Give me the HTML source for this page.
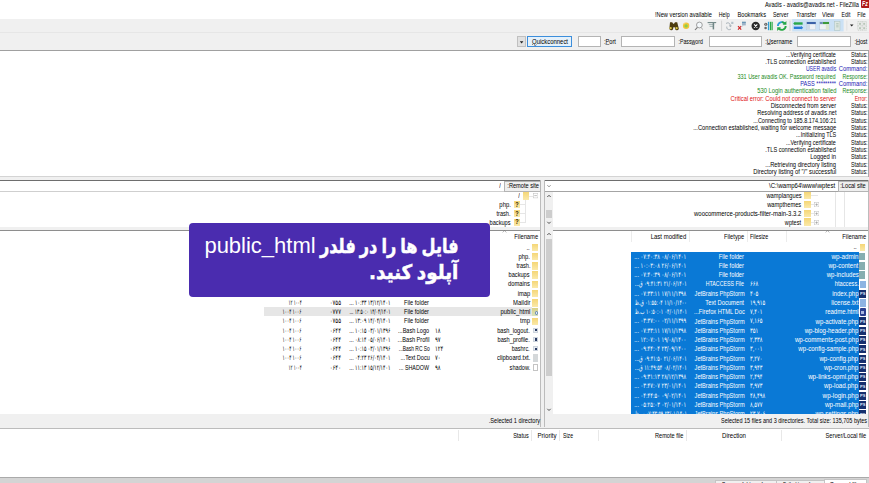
<!DOCTYPE html>
<html lang="fa"><head><meta charset="utf-8"><title>FileZilla</title><style>
html,body{margin:0;padding:0;background:#fff;}
body{width:869px;height:483px;overflow:hidden;position:relative;font-family:"Liberation Sans",sans-serif;}
.b{position:absolute;display:block;}
.bb{box-sizing:border-box;}
.t{position:absolute;white-space:nowrap;font:6.6px/8px "Liberation Sans",sans-serif;color:#000;direction:ltr;}
.fa{font-family:"DejaVu Sans","Liberation Sans",sans-serif;font-size:7px;}
.ov{position:absolute;white-space:nowrap;color:#fff;}
.fab{font:bold 20px/28px "DejaVu Sans",sans-serif;transform-origin:100% 50%;-webkit-text-stroke:0.5px #fff;word-spacing:-2px;}
u{text-decoration-thickness:0.4px;text-underline-offset:0.2px;text-decoration-color:#8a8a8a;}
</style></head>
<body>
<div class="b" style="left:0.00px;top:18.50px;width:869.00px;height:31.50px;background:#f0f0f0;"></div>
<div class="b" style="left:0.00px;top:32.00px;width:869.00px;height:1.00px;background:#e6e6e6;"></div>
<div class="b" style="left:0.00px;top:49.50px;width:869.00px;height:1.50px;background:#a0a0a0;"></div>
<div class="b" style="left:0.00px;top:176.20px;width:869.00px;height:0.80px;background:#d4d4d4;"></div>
<div class="b" style="left:0.00px;top:177.00px;width:869.00px;height:3.00px;background:#f0f0f0;"></div>
<div class="b" style="left:868.00px;top:51.00px;width:1.00px;height:126.00px;background:#a8a8a8;"></div>
<div class="t" style="top:0.60px;right:10.40px;transform-origin:100% 50%;transform:scaleX(0.855);">Avadis - avadis@avadis.net - FileZilla</div>
<div class="b" style="left:860.9px;top:0px;width:8.1px;height:7.5px;background:#ae1a1a;border-radius:0 0 0 1px;"></div>
<div class="t" style="top:-0.10px;left:862.20px;color:#fff;font-size:7px;transform-origin:0 50%;transform:scaleX(0.745);font-weight:bold;font-style:italic;"><b>F</b>z</div>
<div class="t" style="top:11.00px;right:3.00px;transform-origin:100% 50%;transform:scaleX(0.791);">File</div>
<div class="t" style="top:11.00px;right:18.20px;transform-origin:100% 50%;transform:scaleX(0.774);">Edit</div>
<div class="t" style="top:11.00px;right:34.60px;transform-origin:100% 50%;transform:scaleX(0.853);">View</div>
<div class="t" style="top:11.00px;right:53.20px;transform-origin:100% 50%;transform:scaleX(0.827);">Transfer</div>
<div class="t" style="top:11.00px;right:80.10px;transform-origin:100% 50%;transform:scaleX(0.798);">Server</div>
<div class="t" style="top:11.00px;right:102.70px;transform-origin:100% 50%;transform:scaleX(0.864);">Bookmarks</div>
<div class="t" style="top:11.00px;right:139.00px;transform-origin:100% 50%;transform:scaleX(0.796);">Help</div>
<div class="t" style="top:11.00px;right:157.00px;transform-origin:100% 50%;transform:scaleX(0.864);">!New version available</div>
<svg class="b" style="left:660px;top:18px" width="209" height="15" viewBox="660 18 209 15">
<rect x="792.2" y="19" width="51.4" height="12.4" fill="#cbe1f5"/>
<g stroke="#9aa89a" stroke-width="0.5" fill="none"><rect x="857.8" y="21.6" width="8.6" height="8.6" stroke-dasharray="1 0.9"/><path d="M857.8 25.9h8.6M862.1 21.6v8.6" stroke-dasharray="1 0.9"/></g>
<g fill="#b9c6b9"><rect x="859" y="22.8" width="2" height="2"/><rect x="863.2" y="22.8" width="2" height="2"/><rect x="859" y="27.2" width="2" height="2"/><rect x="863.2" y="27.2" width="2" height="2"/></g>
<path d="M849.9 24.4h3.6l-1.8 2.1z" fill="#222"/>
<path d="M846.8 20.6v10" stroke="#d8d8d8" stroke-width="0.6"/>
<g><rect x="794.6" y="22.3" width="8" height="2.4" fill="#2aa84a"/><rect x="793.8" y="26.6" width="8" height="2.4" fill="#2b7bd6"/><path d="M793.2 23.5l2-1.8v3.6z" fill="#2aa84a"/><path d="M803.2 27.8l-2-1.8v3.6z" fill="#2b7bd6"/></g>
<g><rect x="806.8" y="22" width="9" height="7.8" fill="#eef2f6" stroke="#b4c4d4" stroke-width="0.4"/><rect x="806.8" y="22" width="9" height="2.1" fill="#3b62a8"/><rect x="806.8" y="24.1" width="3.2" height="5.7" fill="#cfdbe8"/></g>
<g><rect x="819.8" y="22" width="9.2" height="7.8" fill="#eef2f6" stroke="#b4c4d4" stroke-width="0.4"/><rect x="822.8" y="22" width="6.2" height="2.1" fill="#3c9a3c"/><rect x="819.8" y="22" width="3" height="2.1" fill="#6f8fb8"/><rect x="825.8" y="24.1" width="3.2" height="5.7" fill="#dbe6cf"/></g>
<g><rect x="834.8" y="21.6" width="5.2" height="8.6" fill="#dde7e2" stroke="#a9bcb0" stroke-width="0.4"/><path d="M836.2 23.6h2.4M836.2 25.2h2.4M836.2 26.8h2.4" stroke="#8faa98" stroke-width="0.5"/></g>
<path d="M790 20.6v10.4" stroke="#c4c4c4" stroke-width="0.7"/>
<g fill="none" stroke-width="1.9"><path d="M777.9 26a3.9 3.9 0 0 1 6.8-2.5" stroke="#2f9fd8"/><path d="M785.7 26a3.9 3.9 0 0 1-6.8 2.5" stroke="#27a844"/><path d="M781.8 22.1a3.9 3.9 0 0 1 2.9 1.4" stroke="#27a844"/></g>
<path d="M786.4 20.9v3.8h-3.8zM777.2 31.1v-3.8h3.8z" fill="#27a844"/>
<g><rect x="767.9" y="21.8" width="1.3" height="8.4" fill="#2f9fd8"/><rect x="769.9" y="21.8" width="1.3" height="8.4" fill="#27a844"/><rect x="771.6" y="21.8" width="1.1" height="8.4" fill="#27a844"/><circle cx="765.8" cy="24.2" r="1.5" fill="#555"/><circle cx="765.8" cy="24.2" r="0.6" fill="#ddd"/><circle cx="765.6" cy="28" r="1.3" fill="#6a6a6a"/></g>
<circle cx="755.7" cy="26" r="4.2" fill="#2a2a2a"/><path d="M754.1 24.4l3.2 3.2M757.3 24.4l-3.2 3.2" stroke="#fff" stroke-width="1.1"/>
<g><path d="M742 21.8h3.8v3.6h-3.8z" fill="#9db4c8"/><path d="M742 21.8h3.8v1h-3.8z" fill="#5e8fb0"/><path d="M738 26.2l3.2 3.4M741.2 26.2l-3.2 3.4" stroke="#d02828" stroke-width="1.2"/><path d="M743 25.4l-1.4 1.6" stroke="#9db4c8" stroke-width="0.6"/></g>
<g fill="none" stroke="#a4aeb6" stroke-width="1"><path d="M726 23.6c2.2-1.8 4.6-.2 4.2 2.6"/><path d="M731 29c-2.2 1.6-4.6.2-4.2-2.4"/></g><path d="M732 25.4l-1.6 1.8-1.6-1.8z" fill="#a4aeb6"/><path d="M731.2 21.8h2.2v2.2h-2.2z" fill="#b4c0c8"/>
<path d="M721.6 20.6v10.4" stroke="#c4c4c4" stroke-width="0.7"/>
<g stroke="#6f8585" stroke-width="0.9"><path d="M707.6 22.6h8.6" stroke-width="1.1"/><path d="M708.8 24.6h5.4M709.6 26.4h3.6" stroke="#9aaeae"/><path d="M713.4 23v6.4" stroke-width="1.5"/></g>
<circle cx="699.4" cy="25" r="2.9" fill="#f4f8fb" stroke="#8a8a8a" stroke-width="0.8"/><path d="M697.4 27.4l-2.4 2.6" stroke="#777" stroke-width="1.1"/><path d="M701.4 27.6l1.2 2" stroke="#999" stroke-width="0.8"/>
<circle cx="686.1" cy="25.8" r="3.2" fill="#f2c53a"/><circle cx="686.1" cy="25.9" r="1.7" fill="#8ccf4a"/><path d="M683.4 24.4a3 3 0 0 1 2.4-1.7" stroke="#f7e39a" stroke-width="0.7" fill="none"/>
<path d="M670 22.2h2.2l1 1.6h.8l1-1.6h2.2l1.6 6.2a1.9 1.9 0 0 1-3.7.6l-.3-1.8h-1.4l-.3 1.8a1.9 1.9 0 0 1-3.7-.6z" fill="#4d3d10"/><circle cx="670.6" cy="28.1" r="1.2" fill="#d9c545"/><circle cx="676.6" cy="28.1" r="1.2" fill="#d9c545"/>
</svg>
<div class="b bb" style="left:797.4px;top:36.4px;width:53.60000000000002px;height:10.399999999999999px;background:#fff;border:1px solid #b4b4b4;"></div>
<div class="b bb" style="left:709px;top:36.4px;width:53px;height:10.399999999999999px;background:#fff;border:1px solid #b4b4b4;"></div>
<div class="b bb" style="left:621px;top:36.4px;width:53.799999999999955px;height:10.399999999999999px;background:#fff;border:1px solid #b4b4b4;"></div>
<div class="b bb" style="left:578px;top:36.4px;width:23.399999999999977px;height:10.399999999999999px;background:#fff;border:1px solid #b4b4b4;"></div>
<div class="t" style="top:37.90px;right:2.00px;transform-origin:100% 50%;transform:scaleX(0.844);">:<u>H</u>ost</div>
<div class="t" style="top:37.90px;right:76.40px;transform-origin:100% 50%;transform:scaleX(0.837);">:<u>U</u>sername</div>
<div class="t" style="top:37.90px;right:165.80px;transform-origin:100% 50%;transform:scaleX(0.786);">:Pass<u>w</u>ord</div>
<div class="t" style="top:37.90px;right:253.00px;transform-origin:100% 50%;transform:scaleX(0.860);">:<u>P</u>ort</div>
<div class="b bb" style="left:527.3px;top:36px;width:44.6px;height:11.4px;background:#e5f1fb;border:1px solid #3c8edb;"></div>
<div class="t" style="top:37.90px;left:450.00px;width:200px;text-align:center;transform-origin:50% 50%;transform:scaleX(0.901);"><u>Q</u>uickconnect</div>
<div class="b bb" style="left:517px;top:36.2px;width:9.2px;height:11px;background:#e1e1e1;border:1px solid #c0c0c0;"></div>
<svg class="b" style="left:517px;top:36px" width="10" height="12"><path d="M2.8 5.2h3.6l-1.8 2.2z" fill="#222"/></svg>
<div class="t" style="top:50.60px;right:1.60px;color:#000;transform-origin:100% 50%;transform:scaleX(0.804);">Status:</div>
<div class="t" style="top:50.60px;right:33.00px;color:#000;transform-origin:100% 50%;transform:scaleX(0.818);">...Verifying certificate</div>
<div class="t" style="top:57.95px;right:1.60px;color:#000;transform-origin:100% 50%;transform:scaleX(0.804);">Status:</div>
<div class="t" style="top:57.95px;right:33.00px;color:#000;transform-origin:100% 50%;transform:scaleX(0.852);">.TLS connection established</div>
<div class="t" style="top:65.29px;right:1.60px;color:#1a1ab4;transform-origin:100% 50%;transform:scaleX(0.881);">Command:</div>
<div class="t" style="top:65.29px;right:33.00px;color:#1a1ab4;transform-origin:100% 50%;transform:scaleX(0.773);">USER avadis</div>
<div class="t" style="top:72.64px;right:1.60px;color:#1a8a1a;transform-origin:100% 50%;transform:scaleX(0.793);">Response:</div>
<div class="t" style="top:72.64px;right:33.00px;color:#1a8a1a;transform-origin:100% 50%;transform:scaleX(0.835);">331 User avadis OK. Password required</div>
<div class="t" style="top:79.98px;right:1.60px;color:#1a1ab4;transform-origin:100% 50%;transform:scaleX(0.881);">Command:</div>
<div class="t" style="top:79.98px;right:33.00px;color:#1a1ab4;transform-origin:100% 50%;transform:scaleX(0.854);">PASS *********</div>
<div class="t" style="top:87.33px;right:1.60px;color:#1a8a1a;transform-origin:100% 50%;transform:scaleX(0.793);">Response:</div>
<div class="t" style="top:87.33px;right:33.00px;color:#1a8a1a;transform-origin:100% 50%;transform:scaleX(0.886);">530 Login authentication failed</div>
<div class="t" style="top:94.67px;right:1.60px;color:#e01010;transform-origin:100% 50%;transform:scaleX(0.776);">Error:</div>
<div class="t" style="top:94.67px;right:33.00px;color:#e01010;transform-origin:100% 50%;transform:scaleX(0.879);">Critical error: Could not connect to server</div>
<div class="t" style="top:102.02px;right:1.60px;color:#000;transform-origin:100% 50%;transform:scaleX(0.804);">Status:</div>
<div class="t" style="top:102.02px;right:33.00px;color:#000;transform-origin:100% 50%;transform:scaleX(0.871);">Disconnected from server</div>
<div class="t" style="top:109.36px;right:1.60px;color:#000;transform-origin:100% 50%;transform:scaleX(0.804);">Status:</div>
<div class="t" style="top:109.36px;right:33.00px;color:#000;transform-origin:100% 50%;transform:scaleX(0.848);">Resolving address of avadis.net</div>
<div class="t" style="top:116.71px;right:1.60px;color:#000;transform-origin:100% 50%;transform:scaleX(0.804);">Status:</div>
<div class="t" style="top:116.71px;right:33.00px;color:#000;transform-origin:100% 50%;transform:scaleX(0.836);">...Connecting to 185.8.174.106:21</div>
<div class="t" style="top:124.05px;right:1.60px;color:#000;transform-origin:100% 50%;transform:scaleX(0.804);">Status:</div>
<div class="t" style="top:124.05px;right:33.00px;color:#000;transform-origin:100% 50%;transform:scaleX(0.871);">...Connection established, waiting for welcome message</div>
<div class="t" style="top:131.40px;right:1.60px;color:#000;transform-origin:100% 50%;transform:scaleX(0.804);">Status:</div>
<div class="t" style="top:131.40px;right:33.00px;color:#000;transform-origin:100% 50%;transform:scaleX(0.833);">...Initializing TLS</div>
<div class="t" style="top:138.74px;right:1.60px;color:#000;transform-origin:100% 50%;transform:scaleX(0.804);">Status:</div>
<div class="t" style="top:138.74px;right:33.00px;color:#000;transform-origin:100% 50%;transform:scaleX(0.818);">...Verifying certificate</div>
<div class="t" style="top:146.09px;right:1.60px;color:#000;transform-origin:100% 50%;transform:scaleX(0.804);">Status:</div>
<div class="t" style="top:146.09px;right:33.00px;color:#000;transform-origin:100% 50%;transform:scaleX(0.852);">.TLS connection established</div>
<div class="t" style="top:153.43px;right:1.60px;color:#000;transform-origin:100% 50%;transform:scaleX(0.804);">Status:</div>
<div class="t" style="top:153.43px;right:33.00px;color:#000;transform-origin:100% 50%;transform:scaleX(0.887);">Logged in</div>
<div class="t" style="top:160.78px;right:1.60px;color:#000;transform-origin:100% 50%;transform:scaleX(0.804);">Status:</div>
<div class="t" style="top:160.78px;right:33.00px;color:#000;transform-origin:100% 50%;transform:scaleX(0.872);">...Retrieving directory listing</div>
<div class="t" style="top:168.12px;right:1.60px;color:#000;transform-origin:100% 50%;transform:scaleX(0.804);">Status:</div>
<div class="t" style="top:168.12px;right:33.00px;color:#000;transform-origin:100% 50%;transform:scaleX(0.890);">Directory listing of "/" successful</div>
<div class="b" style="left:0.00px;top:180.00px;width:541.00px;height:247.00px;background:#fff;"></div>
<div class="b" style="left:0.00px;top:179.60px;width:541.00px;height:1.00px;background:#6e6e6e;"></div>
<div class="b" style="left:0.00px;top:191.00px;width:541.00px;height:1.00px;background:#cfcfcf;"></div>
<div class="b" style="left:0.00px;top:226.80px;width:541.00px;height:2.80px;background:#f0f0f0;"></div>
<div class="b" style="left:0.00px;top:229.60px;width:541.00px;height:1.00px;background:#8e8e8e;"></div>
<div class="b" style="left:0.00px;top:414.00px;width:541.00px;height:13.00px;background:#f0f0f0;"></div>
<div class="b" style="left:544.40px;top:180.00px;width:324.60px;height:247.00px;background:#fff;"></div>
<div class="b" style="left:544.40px;top:179.60px;width:324.60px;height:1.00px;background:#6e6e6e;"></div>
<div class="b" style="left:544.40px;top:191.00px;width:324.60px;height:1.00px;background:#a4a4a4;"></div>
<div class="b" style="left:544.40px;top:226.80px;width:324.60px;height:2.80px;background:#f0f0f0;"></div>
<div class="b" style="left:544.40px;top:229.60px;width:324.60px;height:1.00px;background:#8e8e8e;"></div>
<div class="b" style="left:544.40px;top:414.00px;width:324.60px;height:13.00px;background:#f0f0f0;"></div>
<div class="b" style="left:541.00px;top:180.00px;width:3.40px;height:250.00px;background:#f0f0f0;"></div>
<div class="b" style="left:540.40px;top:180.00px;width:0.80px;height:247.00px;background:#bcbcbc;"></div>
<div class="b" style="left:544.00px;top:180.00px;width:0.80px;height:247.00px;background:#bcbcbc;"></div>
<div class="b" style="left:868.20px;top:180.00px;width:0.80px;height:247.00px;background:#bcbcbc;"></div>
<div class="b bb" style="left:837.6px;top:180.6px;width:31.4px;height:11px;background:#efefef;border:1px solid #b4b4b4;"></div>
<div class="t" style="top:182.20px;right:3.00px;transform-origin:100% 50%;transform:scaleX(0.855);">:Local site</div>
<div class="t" style="top:182.20px;right:33.70px;transform-origin:100% 50%;transform:scaleX(0.917);">\C:\wamp64\www\wptest</div>
<div class="b bb" style="left:503.8px;top:180.6px;width:37.2px;height:11px;background:#efefef;border:1px solid #b4b4b4;"></div>
<div class="t" style="top:182.20px;right:330.30px;transform-origin:100% 50%;transform:scaleX(0.856);">:Remote site</div>
<div class="t" style="top:182.20px;right:368.00px;transform-origin:100% 50%;transform:scaleX(0.870);">/</div>
<svg class="b" style="left:545px;top:181px" width="8" height="10"><path d="M2.4 4.2l1.6 1.6l1.6-1.6" fill="none" stroke="#444" stroke-width="0.6"/></svg>
<div class="b" style="left:545.00px;top:192.00px;width:7.80px;height:34.80px;background:#f0f0f0;"></div>
<div class="b" style="left:545.60px;top:210.00px;width:6.80px;height:7.60px;background:#cdcdcd;"></div>
<svg class="b" style="left:545px;top:192px" width="7.7999999999999545" height="34.80000000000001"><path d="M2.299999999999977 5.0l1.7-1.7l1.7 1.7M2.299999999999977 29.80000000000001l1.7 1.7l1.7-1.7" fill="none" stroke="#404040" stroke-width="0.9"/></svg>
<div class="b" style="left:545.00px;top:230.20px;width:7.80px;height:183.80px;background:#f0f0f0;"></div>
<div class="b" style="left:545.60px;top:239.40px;width:6.80px;height:136.40px;background:#cdcdcd;"></div>
<svg class="b" style="left:545px;top:230.2px" width="7.7999999999999545" height="183.8"><path d="M2.299999999999977 5.0l1.7-1.7l1.7 1.7M2.299999999999977 178.8l1.7 1.7l1.7-1.7" fill="none" stroke="#404040" stroke-width="0.9"/></svg>
<div class="b" style="left:835.00px;top:192.00px;width:0.80px;height:34.80px;background:#e6e6e6;"></div>
<div class="b" style="left:844.00px;top:192.00px;width:0.80px;height:34.80px;background:#e6e6e6;"></div>
<div class="b" style="left:804.4px;top:191.70px;width:6.2px;height:7.8px;background:#f9e28e;background-image:linear-gradient(180deg,rgba(240,200,90,.45),rgba(255,255,255,.25));"></div>
<div class="t" style="top:191.80px;right:67.70px;transform-origin:100% 50%;transform:scaleX(0.865);">wamplangues</div>
<div class="b" style="left:810.60px;top:195.30px;width:7.40px;height:0.70px;background:#e6e6e6;"></div>
<div class="b" style="left:804.4px;top:200.63px;width:6.2px;height:7.8px;background:#f9e28e;background-image:linear-gradient(180deg,rgba(240,200,90,.45),rgba(255,255,255,.25));"></div>
<div class="t" style="top:200.73px;right:67.70px;transform-origin:100% 50%;transform:scaleX(0.867);">wampthemes</div>
<div class="b" style="left:810.60px;top:204.23px;width:3.40px;height:0.70px;background:#e6e6e6;"></div>
<svg class="b" style="left:814px;top:201.93px" width="5.2" height="5.2"><rect x="0.3" y="0.3" width="4.6" height="4.6" fill="#fff" stroke="#bcbcbc" stroke-width="0.5"/><path d="M1.3 2.6h2.6M2.6 1.3v2.6" stroke="#808080" stroke-width="0.5"/></svg>
<div class="b" style="left:804.4px;top:209.56px;width:6.2px;height:7.8px;background:#f9e28e;background-image:linear-gradient(180deg,rgba(240,200,90,.45),rgba(255,255,255,.25));"></div>
<div class="t" style="top:209.66px;right:67.70px;transform-origin:100% 50%;transform:scaleX(0.907);">woocommerce-products-filter-main-3.3.2</div>
<div class="b" style="left:810.60px;top:213.16px;width:3.40px;height:0.70px;background:#e6e6e6;"></div>
<svg class="b" style="left:814px;top:210.86px" width="5.2" height="5.2"><rect x="0.3" y="0.3" width="4.6" height="4.6" fill="#fff" stroke="#bcbcbc" stroke-width="0.5"/><path d="M1.3 2.6h2.6M2.6 1.3v2.6" stroke="#808080" stroke-width="0.5"/></svg>
<div class="b" style="left:804.4px;top:218.49px;width:6.2px;height:7.8px;background:#f9e28e;background-image:linear-gradient(180deg,rgba(240,200,90,.45),rgba(255,255,255,.25));"></div>
<div class="t" style="top:218.59px;right:67.70px;transform-origin:100% 50%;transform:scaleX(0.850);">wptest</div>
<div class="b" style="left:810.60px;top:222.09px;width:3.40px;height:0.70px;background:#e6e6e6;"></div>
<svg class="b" style="left:814px;top:219.79px" width="5.2" height="5.2"><rect x="0.3" y="0.3" width="4.6" height="4.6" fill="#fff" stroke="#bcbcbc" stroke-width="0.5"/><path d="M1.3 2.6h2.6M2.6 1.3v2.6" stroke="#808080" stroke-width="0.5"/></svg>
<div class="b" style="left:523.2px;top:192.10px;width:6px;height:7.8px;background:#f9e28e;background-image:linear-gradient(180deg,rgba(240,200,90,.45),rgba(255,255,255,.25));"></div>
<div class="t" style="top:192.20px;right:349.00px;transform-origin:100% 50%;transform:scaleX(0.870);">/</div>
<svg class="b" style="left:532.8px;top:193.4px" width="5.2" height="5.2"><rect x="0.3" y="0.3" width="4.6" height="4.6" fill="#fff" stroke="#bcbcbc" stroke-width="0.5"/><path d="M1.3 2.6h2.6" stroke="#808080" stroke-width="0.5"/></svg>
<div class="b" style="left:529.00px;top:195.70px;width:3.80px;height:0.70px;background:#e6e6e6;"></div>
<div class="b" style="left:525.30px;top:200.00px;width:0.70px;height:22.30px;background:#e6e6e6;"></div>
<div class="b" style="left:514px;top:201.00px;width:5.7px;height:7px;background:#f9e28e;background-image:linear-gradient(180deg,rgba(240,200,90,.45),rgba(255,255,255,.25));"></div>
<div class="t" style="top:200.60px;left:416.90px;width:200px;text-align:center;color:#2a2204;font-size:6.4px;transform-origin:50% 50%;transform:scaleX(0.870);"><b>?</b></div>
<div class="b" style="left:519.60px;top:204.20px;width:6.00px;height:0.70px;background:#e6e6e6;"></div>
<div class="t" style="top:200.70px;right:358.20px;transform-origin:100% 50%;transform:scaleX(0.895);">php.</div>
<div class="b" style="left:514px;top:209.90px;width:5.7px;height:7px;background:#f9e28e;background-image:linear-gradient(180deg,rgba(240,200,90,.45),rgba(255,255,255,.25));"></div>
<div class="t" style="top:209.50px;left:416.90px;width:200px;text-align:center;color:#2a2204;font-size:6.4px;transform-origin:50% 50%;transform:scaleX(0.870);"><b>?</b></div>
<div class="b" style="left:519.60px;top:213.10px;width:6.00px;height:0.70px;background:#e6e6e6;"></div>
<div class="t" style="top:209.60px;right:358.20px;transform-origin:100% 50%;transform:scaleX(0.848);">trash.</div>
<div class="b" style="left:514px;top:218.80px;width:5.7px;height:7px;background:#f9e28e;background-image:linear-gradient(180deg,rgba(240,200,90,.45),rgba(255,255,255,.25));"></div>
<div class="t" style="top:218.40px;left:416.90px;width:200px;text-align:center;color:#2a2204;font-size:6.4px;transform-origin:50% 50%;transform:scaleX(0.870);"><b>?</b></div>
<div class="b" style="left:519.60px;top:222.00px;width:6.00px;height:0.70px;background:#e6e6e6;"></div>
<div class="t" style="top:218.50px;right:358.20px;transform-origin:100% 50%;transform:scaleX(0.855);">backups</div>
<div class="b" style="left:631.30px;top:231.20px;width:0.80px;height:10.40px;background:#ececec;"></div>
<div class="b" style="left:688.80px;top:231.20px;width:0.80px;height:10.40px;background:#ececec;"></div>
<div class="b" style="left:747.40px;top:231.20px;width:0.80px;height:10.40px;background:#ececec;"></div>
<div class="b" style="left:786.20px;top:231.20px;width:0.80px;height:10.40px;background:#ececec;"></div>
<div class="t" style="top:232.60px;right:3.00px;transform-origin:100% 50%;transform:scaleX(0.877);">Filename</div>
<div class="t" style="top:232.60px;left:749.80px;transform-origin:0 50%;transform:scaleX(0.818);">Filesize</div>
<div class="t" style="top:232.60px;right:124.70px;transform-origin:100% 50%;transform:scaleX(0.866);">Filetype</div>
<div class="t" style="top:232.60px;right:182.40px;transform-origin:100% 50%;transform:scaleX(0.905);">Last modified</div>
<svg class="b" style="left:824.6px;top:229.8px" width="5" height="3"><path d="M0.6 2.4l1.9-1.8l1.9 1.8" fill="none" stroke="#707070" stroke-width="0.5"/></svg>
<div class="b" style="left:630.80px;top:251.80px;width:228.60px;height:162.20px;background:#0a79d6;"></div>
<div class="b" style="left:859.5px;top:243.60px;width:5.9px;height:7.4px;background:#f9e28e;background-image:linear-gradient(180deg,rgba(240,200,90,.45),rgba(255,255,255,.25));"></div>
<div class="t" style="top:243.30px;right:12.00px;transform-origin:100% 50%;transform:scaleX(0.870);">..</div>
<div class="b" style="left:545px;top:241.8px;width:324px;height:172.2px;overflow:hidden">
<div class="t" style="top:10.87px;right:10.60px;color:#fff;transform-origin:100% 50%;transform:scaleX(0.951);">wp-admin</div>
<div class="t" style="top:10.87px;right:124.70px;color:#fff;transform-origin:100% 50%;transform:scaleX(0.870);">File folder</div>
<div class="t fa" style="top:10.77px;right:182.40px;color:#fff;transform-origin:100% 50%;transform:scaleX(0.710);unicode-bidi:bidi-override;">... ۰۷:۴۰:۳۸ ۰۸/۰۶/۱۴۰۱</div>
<div class="b" style="left:314.4px;top:11.07px;width:6px;height:7.4px;background:#86aeb0;"></div>
<div class="t" style="top:20.14px;right:10.60px;color:#fff;transform-origin:100% 50%;transform:scaleX(0.924);">wp-content</div>
<div class="t" style="top:20.14px;right:124.70px;color:#fff;transform-origin:100% 50%;transform:scaleX(0.870);">File folder</div>
<div class="t fa" style="top:20.04px;right:182.40px;color:#fff;transform-origin:100% 50%;transform:scaleX(0.710);unicode-bidi:bidi-override;">... ۱۰:۰۳:۰۸ ۲۶/۰۶/۱۴۰۱</div>
<div class="b" style="left:314.4px;top:20.34px;width:6px;height:7.4px;background:#86aeb0;"></div>
<div class="t" style="top:29.41px;right:10.60px;color:#fff;transform-origin:100% 50%;transform:scaleX(0.922);">wp-includes</div>
<div class="t" style="top:29.41px;right:124.70px;color:#fff;transform-origin:100% 50%;transform:scaleX(0.870);">File folder</div>
<div class="t fa" style="top:29.31px;right:182.40px;color:#fff;transform-origin:100% 50%;transform:scaleX(0.710);unicode-bidi:bidi-override;">... ۰۷:۴۰:۳۹ ۰۸/۰۶/۱۴۰۱</div>
<div class="b" style="left:314.4px;top:29.61px;width:6px;height:7.4px;background:#86aeb0;"></div>
<div class="t" style="top:38.68px;right:10.60px;color:#fff;transform-origin:100% 50%;transform:scaleX(0.861);">htaccess.</div>
<div class="t fa" style="top:38.58px;left:205.00px;color:#fff;transform-origin:0 50%;transform:scaleX(0.745);">۶۶۸</div>
<div class="t" style="top:38.68px;right:124.70px;color:#fff;transform-origin:100% 50%;transform:scaleX(0.796);">HTACCESS File</div>
<div class="t fa" style="top:38.58px;right:182.40px;color:#fff;transform-origin:100% 50%;transform:scaleX(0.661);unicode-bidi:bidi-override;">...ق ۰۹:۴۱:۳۱ ۲۱/۰۶/۱۴۰۱</div>
<div class="b" style="left:314.79999999999995px;top:38.78px;width:5.8px;height:7.6px;background:#8db4e2;"></div>
<div class="t" style="top:47.95px;right:10.60px;color:#fff;transform-origin:100% 50%;transform:scaleX(0.923);">index.php</div>
<div class="t fa" style="top:47.85px;left:205.00px;color:#fff;transform-origin:0 50%;transform:scaleX(0.745);">۴۰۵</div>
<div class="t" style="top:47.95px;right:124.70px;color:#fff;transform-origin:100% 50%;transform:scaleX(0.854);">JetBrains PhpStorm</div>
<div class="t fa" style="top:47.85px;right:182.40px;color:#fff;transform-origin:100% 50%;transform:scaleX(0.710);unicode-bidi:bidi-override;">... ۰۷:۳۳:۱۱ ۱۷/۱۱/۱۳۹۸</div>
<div class="b" style="left:314.4px;top:47.85px;width:7px;height:8px;background:#15306e;"></div>
<div class="t" style="top:48.25px;left:315.20px;color:#dfe8ff;font-size:4.4px;transform-origin:0 50%;transform:scaleX(0.922);font-weight:bold;">PS</div>
<div class="t" style="top:57.22px;right:10.60px;color:#fff;transform-origin:100% 50%;transform:scaleX(0.921);">license.txt</div>
<div class="t fa" style="top:57.12px;left:205.00px;color:#fff;transform-origin:0 50%;transform:scaleX(0.723);">۱۹,۹۱۵</div>
<div class="t" style="top:57.22px;right:124.70px;color:#fff;transform-origin:100% 50%;transform:scaleX(0.878);">Text Document</div>
<div class="t fa" style="top:57.12px;right:182.40px;color:#fff;transform-origin:100% 50%;transform:scaleX(0.645);unicode-bidi:bidi-override;">ظ.ق ۰۱:۵۵:۰۴ ۱۱/۱۰/۱۴۰۰</div>
<div class="b" style="left:314.79999999999995px;top:57.32px;width:5.8px;height:7.6px;background:#8db4e2;"></div>
<div class="t" style="top:66.49px;right:10.60px;color:#fff;transform-origin:100% 50%;transform:scaleX(0.914);">readme.html</div>
<div class="t fa" style="top:66.39px;left:205.00px;color:#fff;transform-origin:0 50%;transform:scaleX(0.718);">۷,۴۰۱</div>
<div class="t" style="top:66.49px;right:124.70px;color:#fff;transform-origin:100% 50%;transform:scaleX(0.863);">...Firefox HTML Doc</div>
<div class="t fa" style="top:66.39px;right:182.40px;color:#fff;transform-origin:100% 50%;transform:scaleX(0.636);unicode-bidi:bidi-override;">ظ.ب ۱۰:۵۰:۰۱ ۰۴/۰۱/۱۴۰۱</div>
<div class="b" style="left:314.59999999999997px;top:66.49px;width:6.4px;height:7.8px;background:#2a3f8e;border-radius:1px;"></div><div class="b" style="left:316.2px;top:68.79px;width:3.2px;height:3.6px;background:#a9b8e0;"></div>
<div class="t" style="top:75.76px;right:10.60px;color:#fff;transform-origin:100% 50%;transform:scaleX(0.924);">wp-activate.php</div>
<div class="t fa" style="top:75.66px;left:205.00px;color:#fff;transform-origin:0 50%;transform:scaleX(0.718);">۷,۱۶۵</div>
<div class="t" style="top:75.76px;right:124.70px;color:#fff;transform-origin:100% 50%;transform:scaleX(0.854);">JetBrains PhpStorm</div>
<div class="t fa" style="top:75.66px;right:182.40px;color:#fff;transform-origin:100% 50%;transform:scaleX(0.710);unicode-bidi:bidi-override;">... ۰۳:۳۷:۰۰ ۰۲/۱۱/۱۳۹۹</div>
<div class="b" style="left:314.4px;top:75.66px;width:7px;height:8px;background:#15306e;"></div>
<div class="t" style="top:76.06px;left:315.20px;color:#dfe8ff;font-size:4.4px;transform-origin:0 50%;transform:scaleX(0.922);font-weight:bold;">PS</div>
<div class="t" style="top:85.03px;right:10.60px;color:#fff;transform-origin:100% 50%;transform:scaleX(0.919);">wp-blog-header.php</div>
<div class="t fa" style="top:84.93px;left:205.00px;color:#fff;transform-origin:0 50%;transform:scaleX(0.745);">۳۵۱</div>
<div class="t" style="top:85.03px;right:124.70px;color:#fff;transform-origin:100% 50%;transform:scaleX(0.854);">JetBrains PhpStorm</div>
<div class="t fa" style="top:84.93px;right:182.40px;color:#fff;transform-origin:100% 50%;transform:scaleX(0.710);unicode-bidi:bidi-override;">... ۰۷:۳۳:۱۱ ۱۷/۱۱/۱۳۹۸</div>
<div class="b" style="left:314.4px;top:84.93px;width:7px;height:8px;background:#15306e;"></div>
<div class="t" style="top:85.33px;left:315.20px;color:#dfe8ff;font-size:4.4px;transform-origin:0 50%;transform:scaleX(0.922);font-weight:bold;">PS</div>
<div class="t" style="top:94.30px;right:10.60px;color:#fff;transform-origin:100% 50%;transform:scaleX(0.928);">wp-comments-post.php</div>
<div class="t fa" style="top:94.20px;left:205.00px;color:#fff;transform-origin:0 50%;transform:scaleX(0.718);">۲,۳۳۸</div>
<div class="t" style="top:94.30px;right:124.70px;color:#fff;transform-origin:100% 50%;transform:scaleX(0.854);">JetBrains PhpStorm</div>
<div class="t fa" style="top:94.20px;right:182.40px;color:#fff;transform-origin:100% 50%;transform:scaleX(0.710);unicode-bidi:bidi-override;">... ۱۲:۰۷:۰۱ ۱۹/۰۸/۱۴۰۰</div>
<div class="b" style="left:314.4px;top:94.20px;width:7px;height:8px;background:#15306e;"></div>
<div class="t" style="top:94.60px;left:315.20px;color:#dfe8ff;font-size:4.4px;transform-origin:0 50%;transform:scaleX(0.922);font-weight:bold;">PS</div>
<div class="t" style="top:103.57px;right:10.60px;color:#fff;transform-origin:100% 50%;transform:scaleX(0.933);">wp-config-sample.php</div>
<div class="t fa" style="top:103.47px;left:205.00px;color:#fff;transform-origin:0 50%;transform:scaleX(0.718);">۳,۰۰۱</div>
<div class="t" style="top:103.57px;right:124.70px;color:#fff;transform-origin:100% 50%;transform:scaleX(0.854);">JetBrains PhpStorm</div>
<div class="t fa" style="top:103.47px;right:182.40px;color:#fff;transform-origin:100% 50%;transform:scaleX(0.710);unicode-bidi:bidi-override;">... ۰۹:۴۴:۰۴ ۲۳/۰۹/۱۴۰۰</div>
<div class="b" style="left:314.4px;top:103.47px;width:7px;height:8px;background:#15306e;"></div>
<div class="t" style="top:103.87px;left:315.20px;color:#dfe8ff;font-size:4.4px;transform-origin:0 50%;transform:scaleX(0.922);font-weight:bold;">PS</div>
<div class="t" style="top:112.84px;right:10.60px;color:#fff;transform-origin:100% 50%;transform:scaleX(0.942);">wp-config.php</div>
<div class="t fa" style="top:112.74px;left:205.00px;color:#fff;transform-origin:0 50%;transform:scaleX(0.718);">۳,۲۷۰</div>
<div class="t" style="top:112.84px;right:124.70px;color:#fff;transform-origin:100% 50%;transform:scaleX(0.854);">JetBrains PhpStorm</div>
<div class="t fa" style="top:112.74px;right:182.40px;color:#fff;transform-origin:100% 50%;transform:scaleX(0.661);unicode-bidi:bidi-override;">...ق ۰۹:۴۱:۵۰ ۲۱/۰۶/۱۴۰۱</div>
<div class="b" style="left:314.4px;top:112.74px;width:7px;height:8px;background:#15306e;"></div>
<div class="t" style="top:113.14px;left:315.20px;color:#dfe8ff;font-size:4.4px;transform-origin:0 50%;transform:scaleX(0.922);font-weight:bold;">PS</div>
<div class="t" style="top:122.11px;right:10.60px;color:#fff;transform-origin:100% 50%;transform:scaleX(0.948);">wp-cron.php</div>
<div class="t fa" style="top:122.01px;left:205.00px;color:#fff;transform-origin:0 50%;transform:scaleX(0.718);">۳,۹۴۳</div>
<div class="t" style="top:122.11px;right:124.70px;color:#fff;transform-origin:100% 50%;transform:scaleX(0.854);">JetBrains PhpStorm</div>
<div class="t fa" style="top:122.01px;right:182.40px;color:#fff;transform-origin:100% 50%;transform:scaleX(0.661);unicode-bidi:bidi-override;">...ق ۱۱:۴۹:۵۴ ۰۸/۰۲/۱۴۰۱</div>
<div class="b" style="left:314.4px;top:122.01px;width:7px;height:8px;background:#15306e;"></div>
<div class="t" style="top:122.41px;left:315.20px;color:#dfe8ff;font-size:4.4px;transform-origin:0 50%;transform:scaleX(0.922);font-weight:bold;">PS</div>
<div class="t" style="top:131.38px;right:10.60px;color:#fff;transform-origin:100% 50%;transform:scaleX(0.941);">wp-links-opml.php</div>
<div class="t fa" style="top:131.28px;left:205.00px;color:#fff;transform-origin:0 50%;transform:scaleX(0.718);">۲,۴۹۴</div>
<div class="t" style="top:131.38px;right:124.70px;color:#fff;transform-origin:100% 50%;transform:scaleX(0.854);">JetBrains PhpStorm</div>
<div class="t fa" style="top:131.28px;right:182.40px;color:#fff;transform-origin:100% 50%;transform:scaleX(0.710);unicode-bidi:bidi-override;">... ۰۹:۳۱:۱۳ ۲۸/۱۲/۱۳۹۸</div>
<div class="b" style="left:314.4px;top:131.28px;width:7px;height:8px;background:#15306e;"></div>
<div class="t" style="top:131.68px;left:315.20px;color:#dfe8ff;font-size:4.4px;transform-origin:0 50%;transform:scaleX(0.922);font-weight:bold;">PS</div>
<div class="t" style="top:140.65px;right:10.60px;color:#fff;transform-origin:100% 50%;transform:scaleX(0.946);">wp-load.php</div>
<div class="t fa" style="top:140.55px;left:205.00px;color:#fff;transform-origin:0 50%;transform:scaleX(0.718);">۳,۹۷۳</div>
<div class="t" style="top:140.65px;right:124.70px;color:#fff;transform-origin:100% 50%;transform:scaleX(0.854);">JetBrains PhpStorm</div>
<div class="t fa" style="top:140.55px;right:182.40px;color:#fff;transform-origin:100% 50%;transform:scaleX(0.710);unicode-bidi:bidi-override;">... ۰۳:۴۷:۰۷ ۲۳/۰۱/۱۴۰۱</div>
<div class="b" style="left:314.4px;top:140.55px;width:7px;height:8px;background:#15306e;"></div>
<div class="t" style="top:140.95px;left:315.20px;color:#dfe8ff;font-size:4.4px;transform-origin:0 50%;transform:scaleX(0.922);font-weight:bold;">PS</div>
<div class="t" style="top:149.92px;right:10.60px;color:#fff;transform-origin:100% 50%;transform:scaleX(0.957);">wp-login.php</div>
<div class="t fa" style="top:149.82px;left:205.00px;color:#fff;transform-origin:0 50%;transform:scaleX(0.723);">۴۸,۴۹۸</div>
<div class="t" style="top:149.92px;right:124.70px;color:#fff;transform-origin:100% 50%;transform:scaleX(0.854);">JetBrains PhpStorm</div>
<div class="t fa" style="top:149.82px;right:182.40px;color:#fff;transform-origin:100% 50%;transform:scaleX(0.710);unicode-bidi:bidi-override;">... ۰۴:۴۴:۵۰ ۰۹/۰۲/۱۴۰۱</div>
<div class="b" style="left:314.4px;top:149.82px;width:7px;height:8px;background:#15306e;"></div>
<div class="t" style="top:150.22px;left:315.20px;color:#dfe8ff;font-size:4.4px;transform-origin:0 50%;transform:scaleX(0.922);font-weight:bold;">PS</div>
<div class="t" style="top:159.19px;right:10.60px;color:#fff;transform-origin:100% 50%;transform:scaleX(0.942);">wp-mail.php</div>
<div class="t fa" style="top:159.09px;left:205.00px;color:#fff;transform-origin:0 50%;transform:scaleX(0.718);">۸,۵۷۷</div>
<div class="t" style="top:159.19px;right:124.70px;color:#fff;transform-origin:100% 50%;transform:scaleX(0.854);">JetBrains PhpStorm</div>
<div class="t fa" style="top:159.09px;right:182.40px;color:#fff;transform-origin:100% 50%;transform:scaleX(0.710);unicode-bidi:bidi-override;">... ۰۵:۲۵:۰۳ ۰۲/۰۱/۱۴۰۱</div>
<div class="b" style="left:314.4px;top:159.09px;width:7px;height:8px;background:#15306e;"></div>
<div class="t" style="top:159.49px;left:315.20px;color:#dfe8ff;font-size:4.4px;transform-origin:0 50%;transform:scaleX(0.922);font-weight:bold;">PS</div>
<div class="t" style="top:168.46px;right:10.60px;color:#fff;transform-origin:100% 50%;transform:scaleX(0.924);">wp-settings.php</div>
<div class="t fa" style="top:168.36px;left:205.00px;color:#fff;transform-origin:0 50%;transform:scaleX(0.723);">۲۳,۷۰۶</div>
<div class="t" style="top:168.46px;right:124.70px;color:#fff;transform-origin:100% 50%;transform:scaleX(0.854);">JetBrains PhpStorm</div>
<div class="t fa" style="top:168.36px;right:182.40px;color:#fff;transform-origin:100% 50%;transform:scaleX(0.636);unicode-bidi:bidi-override;">ظ.ب ۰۷:۴۳:۵۹ ۲۳/۰۱/۱۴۰۱</div>
<div class="b" style="left:314.4px;top:168.36px;width:7px;height:8px;background:#15306e;"></div>
<div class="t" style="top:168.76px;left:315.20px;color:#dfe8ff;font-size:4.4px;transform-origin:0 50%;transform:scaleX(0.922);font-weight:bold;">PS</div>
</div>
<div class="t" style="top:416.70px;right:2.00px;transform-origin:100% 50%;transform:scaleX(0.834);">Selected 15 files and 3 directories. Total size: 135,705 bytes</div>
<div class="t" style="top:232.60px;right:331.00px;transform-origin:100% 50%;transform:scaleX(0.877);">Filename</div>
<svg class="b" style="left:501.8px;top:230.4px" width="5" height="3"><path d="M0.6 2.4l1.9-1.8l1.9 1.8" fill="none" stroke="#707070" stroke-width="0.5"/></svg>
<div class="b" style="left:264.00px;top:307.20px;width:268.00px;height:9.20px;background:#e6e6e6;"></div>
<div class="t" style="top:243.50px;right:339.00px;transform-origin:100% 50%;transform:scaleX(0.870);">..</div>
<div class="b" style="left:532.1px;top:243.70px;width:5.8px;height:7.4px;background:#f9e28e;background-image:linear-gradient(180deg,rgba(240,200,90,.45),rgba(255,255,255,.25));"></div>
<div class="t" style="top:252.74px;right:339.00px;transform-origin:100% 50%;transform:scaleX(0.880);">php.</div>
<div class="b" style="left:532.1px;top:252.94px;width:5.8px;height:7.4px;background:#f9e28e;background-image:linear-gradient(180deg,rgba(240,200,90,.45),rgba(255,255,255,.25));"></div>
<div class="t" style="top:261.98px;right:339.00px;transform-origin:100% 50%;transform:scaleX(0.848);">trash.</div>
<div class="b" style="left:532.1px;top:262.18px;width:5.8px;height:7.4px;background:#f9e28e;background-image:linear-gradient(180deg,rgba(240,200,90,.45),rgba(255,255,255,.25));"></div>
<div class="t" style="top:271.22px;right:339.00px;transform-origin:100% 50%;transform:scaleX(0.855);">backups</div>
<div class="b" style="left:532.1px;top:271.42px;width:5.8px;height:7.4px;background:#f9e28e;background-image:linear-gradient(180deg,rgba(240,200,90,.45),rgba(255,255,255,.25));"></div>
<div class="t" style="top:280.46px;right:339.00px;transform-origin:100% 50%;transform:scaleX(0.882);">domains</div>
<div class="b" style="left:532.1px;top:280.66px;width:5.8px;height:7.4px;background:#f9e28e;background-image:linear-gradient(180deg,rgba(240,200,90,.45),rgba(255,255,255,.25));"></div>
<div class="t" style="top:289.70px;right:339.00px;transform-origin:100% 50%;transform:scaleX(0.881);">imap</div>
<div class="b" style="left:532.1px;top:289.90px;width:5.8px;height:7.4px;background:#f9e28e;background-image:linear-gradient(180deg,rgba(240,200,90,.45),rgba(255,255,255,.25));"></div>
<div class="t" style="top:298.94px;right:339.00px;transform-origin:100% 50%;transform:scaleX(0.891);">Maildir</div>
<div class="t" style="top:298.94px;right:439.60px;transform-origin:100% 50%;transform:scaleX(0.863);">File folder</div>
<div class="t fa" style="top:298.84px;right:479.00px;transform-origin:100% 50%;transform:scaleX(0.647);unicode-bidi:bidi-override;">... ۱۰:۳۳ ۱۳/۱۲/۱۴۰۱</div>
<div class="t fa" style="top:298.84px;right:527.60px;transform-origin:100% 50%;transform:scaleX(0.758);">۰۷۵۵</div>
<div class="t fa" style="top:298.84px;right:567.40px;transform-origin:100% 50%;transform:scaleX(0.536);">۱۲ ۱۰۰۴</div>
<div class="b" style="left:532.1px;top:299.14px;width:5.8px;height:7.4px;background:#f9e28e;background-image:linear-gradient(180deg,rgba(240,200,90,.45),rgba(255,255,255,.25));"></div>
<div class="t" style="top:308.18px;right:339.00px;transform-origin:100% 50%;transform:scaleX(0.893);">public_html</div>
<div class="t" style="top:308.18px;right:439.60px;transform-origin:100% 50%;transform:scaleX(0.863);">File folder</div>
<div class="t fa" style="top:308.08px;right:479.00px;transform-origin:100% 50%;transform:scaleX(0.590);unicode-bidi:bidi-override;">... ۱۳:۵۰:۰ ۱۴/۰۴/۱۴۰۱</div>
<div class="t fa" style="top:308.08px;right:527.60px;transform-origin:100% 50%;transform:scaleX(0.758);">۰۷۷۷</div>
<div class="t fa" style="top:308.08px;right:567.40px;transform-origin:100% 50%;transform:scaleX(0.579);">۱۰۰۴ ۱۰۰۶</div>
<div class="b" style="left:532.1px;top:308.38px;width:5.8px;height:7.4px;background:#c9d9a8;background-image:linear-gradient(180deg,rgba(240,200,90,.45),rgba(255,255,255,.25));"></div>
<div class="b bb" style="left:534.6px;top:311.08px;width:3.6px;height:3.6px;border:0.6px solid #5a7fb4;border-radius:50%;background:#dfeaf6;"></div>
<div class="t" style="top:317.42px;right:339.00px;transform-origin:100% 50%;transform:scaleX(0.900);">tmp</div>
<div class="t" style="top:317.42px;right:439.60px;transform-origin:100% 50%;transform:scaleX(0.863);">File folder</div>
<div class="t fa" style="top:317.32px;right:479.00px;transform-origin:100% 50%;transform:scaleX(0.647);unicode-bidi:bidi-override;">... ۱۳:۰۹ ۱۴/۰۴/۱۴۰۱</div>
<div class="t fa" style="top:317.32px;right:527.60px;transform-origin:100% 50%;transform:scaleX(0.758);">۰۷۵۵</div>
<div class="t fa" style="top:317.32px;right:567.40px;transform-origin:100% 50%;transform:scaleX(0.579);">۱۰۰۴ ۱۰۰۶</div>
<div class="b" style="left:532.1px;top:317.62px;width:5.8px;height:7.4px;background:#f9e28e;background-image:linear-gradient(180deg,rgba(240,200,90,.45),rgba(255,255,255,.25));"></div>
<div class="t" style="top:326.66px;right:339.00px;transform-origin:100% 50%;transform:scaleX(0.863);">bash_logout.</div>
<div class="t fa" style="top:326.56px;left:434.80px;transform-origin:0 50%;transform:scaleX(0.744);">۱۸</div>
<div class="t" style="top:326.66px;right:439.60px;transform-origin:100% 50%;transform:scaleX(0.837);">...Bash Logo</div>
<div class="t fa" style="top:326.56px;right:479.00px;transform-origin:100% 50%;transform:scaleX(0.647);unicode-bidi:bidi-override;">... ۱۰:۱۵ ۰۳/۰۱/۱۳۹۶</div>
<div class="t fa" style="top:326.56px;right:527.60px;transform-origin:100% 50%;transform:scaleX(0.758);">۰۶۴۴</div>
<div class="t fa" style="top:326.56px;right:567.40px;transform-origin:100% 50%;transform:scaleX(0.579);">۱۰۰۴ ۱۰۰۶</div>
<div class="b bb" style="left:533.2px;top:327.76px;width:4.8px;height:5.2px;background:#e6ebf1;border:1px solid #cdd4de;"></div><div class="b" style="left:534.6px;top:329.06px;width:2.2px;height:2.4px;background:#2c3d66;"></div>
<div class="t" style="top:335.90px;right:339.00px;transform-origin:100% 50%;transform:scaleX(0.853);">bash_profile.</div>
<div class="t fa" style="top:335.80px;left:434.80px;transform-origin:0 50%;transform:scaleX(0.744);">۹۷</div>
<div class="t" style="top:335.90px;right:439.60px;transform-origin:100% 50%;transform:scaleX(0.850);">...Bash Profil</div>
<div class="t fa" style="top:335.80px;right:479.00px;transform-origin:100% 50%;transform:scaleX(0.647);unicode-bidi:bidi-override;">... ۰۸:۱۴ ۰۵/۰۶/۱۴۰۱</div>
<div class="t fa" style="top:335.80px;right:527.60px;transform-origin:100% 50%;transform:scaleX(0.758);">۰۶۴۴</div>
<div class="t fa" style="top:335.80px;right:567.40px;transform-origin:100% 50%;transform:scaleX(0.579);">۱۰۰۴ ۱۰۰۶</div>
<div class="b bb" style="left:533.2px;top:337.00px;width:4.8px;height:5.2px;background:#e6ebf1;border:1px solid #cdd4de;"></div><div class="b" style="left:534.6px;top:338.30px;width:2.2px;height:2.4px;background:#2c3d66;"></div>
<div class="t" style="top:345.14px;right:339.00px;transform-origin:100% 50%;transform:scaleX(0.828);">bashrc.</div>
<div class="t fa" style="top:345.04px;left:434.80px;transform-origin:0 50%;transform:scaleX(0.745);">۱۲۴</div>
<div class="t" style="top:345.14px;right:439.60px;transform-origin:100% 50%;transform:scaleX(0.742);">...Bash RC So</div>
<div class="t fa" style="top:345.04px;right:479.00px;transform-origin:100% 50%;transform:scaleX(0.647);unicode-bidi:bidi-override;">... ۱۰:۱۵ ۰۳/۰۱/۱۳۹۶</div>
<div class="t fa" style="top:345.04px;right:527.60px;transform-origin:100% 50%;transform:scaleX(0.758);">۰۶۴۴</div>
<div class="t fa" style="top:345.04px;right:567.40px;transform-origin:100% 50%;transform:scaleX(0.579);">۱۰۰۴ ۱۰۰۶</div>
<div class="b bb" style="left:533.2px;top:346.24px;width:4.8px;height:5.2px;background:#e6ebf1;border:1px solid #cdd4de;"></div><div class="b" style="left:534.6px;top:347.54px;width:2.2px;height:2.4px;background:#2c3d66;"></div>
<div class="t" style="top:354.38px;right:339.00px;transform-origin:100% 50%;transform:scaleX(0.893);">clipboard.txt.</div>
<div class="t fa" style="top:354.28px;left:434.80px;transform-origin:0 50%;transform:scaleX(0.744);">۷۰</div>
<div class="t" style="top:354.38px;right:439.60px;transform-origin:100% 50%;transform:scaleX(0.841);">...Text Docu</div>
<div class="t fa" style="top:354.28px;right:479.00px;transform-origin:100% 50%;transform:scaleX(0.647);unicode-bidi:bidi-override;">... ۰۴:۲۳ ۲۶/۰۴/۱۴۰۱</div>
<div class="t fa" style="top:354.28px;right:527.60px;transform-origin:100% 50%;transform:scaleX(0.758);">۰۶۴۴</div>
<div class="t fa" style="top:354.28px;right:567.40px;transform-origin:100% 50%;transform:scaleX(0.579);">۱۰۰۴ ۱۰۰۶</div>
<div class="b" style="left:532.6px;top:354.48px;width:5.6px;height:7.6px;background:#d4d8da;"></div>
<div class="t" style="top:363.62px;right:339.00px;transform-origin:100% 50%;transform:scaleX(0.851);">shadow.</div>
<div class="t fa" style="top:363.52px;left:434.80px;transform-origin:0 50%;transform:scaleX(0.744);">۹۸</div>
<div class="t" style="top:363.62px;right:439.60px;transform-origin:100% 50%;transform:scaleX(0.811);">... SHADOW</div>
<div class="t fa" style="top:363.52px;right:479.00px;transform-origin:100% 50%;transform:scaleX(0.647);unicode-bidi:bidi-override;">... ۱۱:۱۳ ۱۵/۱۲/۱۴۰۱</div>
<div class="t fa" style="top:363.52px;right:527.60px;transform-origin:100% 50%;transform:scaleX(0.758);">۰۶۴۰</div>
<div class="t fa" style="top:363.52px;right:567.40px;transform-origin:100% 50%;transform:scaleX(0.536);">۱۲ ۱۰۰۴</div>
<div class="b bb" style="left:532.6px;top:363.72px;width:5.6px;height:7.6px;background:#fff;border:1px solid #c4c4c4;"></div>
<div class="t" style="top:416.80px;right:329.00px;transform-origin:100% 50%;transform:scaleX(0.855);">.Selected 1 directory</div>
<div class="b" style="left:0.00px;top:427.00px;width:869.00px;height:3.00px;background:#f0f0f0;"></div>
<div class="b" style="left:0.00px;top:428.00px;width:869.00px;height:1.00px;background:#bcbcbc;"></div>
<div class="b" style="left:0.00px;top:429.00px;width:869.00px;height:48.40px;background:#fff;"></div>
<div class="b" style="left:458.00px;top:430.00px;width:0.80px;height:11.00px;background:#e8e8e8;"></div>
<div class="b" style="left:531.00px;top:430.00px;width:0.80px;height:11.00px;background:#e8e8e8;"></div>
<div class="b" style="left:558.50px;top:430.00px;width:0.80px;height:11.00px;background:#e8e8e8;"></div>
<div class="b" style="left:598.00px;top:430.00px;width:0.80px;height:11.00px;background:#e8e8e8;"></div>
<div class="b" style="left:686.00px;top:430.00px;width:0.80px;height:11.00px;background:#e8e8e8;"></div>
<div class="b" style="left:781.00px;top:430.00px;width:0.80px;height:11.00px;background:#e8e8e8;"></div>
<div class="t" style="top:431.60px;right:3.00px;transform-origin:100% 50%;transform:scaleX(0.861);">Server/Local file</div>
<div class="t" style="top:431.60px;left:633.50px;width:200px;text-align:center;transform-origin:50% 50%;transform:scaleX(0.922);">Direction</div>
<div class="t" style="top:431.60px;right:185.50px;transform-origin:100% 50%;transform:scaleX(0.851);">Remote file</div>
<div class="t" style="top:431.60px;left:562.60px;transform-origin:0 50%;transform:scaleX(0.780);">Size</div>
<div class="t" style="top:431.60px;right:312.40px;transform-origin:100% 50%;transform:scaleX(0.926);">Priority</div>
<div class="t" style="top:431.60px;right:340.60px;transform-origin:100% 50%;transform:scaleX(0.829);">Status</div>
<div class="b" style="left:0.00px;top:477.40px;width:869.00px;height:5.60px;background:#d4d4d4;"></div>
<div class="b" style="left:0.00px;top:477.00px;width:869.00px;height:1.00px;background:#aaaaaa;"></div>
<div class="b" style="left:715.00px;top:480.20px;width:61.80px;height:3.80px;background:#f0f0f0;border:1px solid #c4c4c4;box-sizing:border-box;"></div>
<div class="b" style="left:776.00px;top:480.20px;width:49.00px;height:3.80px;background:#f0f0f0;border:1px solid #c4c4c4;box-sizing:border-box;"></div>
<div class="b" style="left:824.20px;top:479.40px;width:42.40px;height:4.60px;background:#fff;border:1px solid #c4c4c4;box-sizing:border-box;"></div>
<div class="t" style="top:480.90px;left:746.00px;width:200px;text-align:center;transform-origin:50% 50%;transform:scaleX(0.894);">Queued files</div>
<div class="t" style="top:481.10px;left:699.70px;width:200px;text-align:center;transform-origin:50% 50%;transform:scaleX(0.748);">Failed transfers</div>
<div class="t" style="top:481.10px;left:645.70px;width:200px;text-align:center;transform-origin:50% 50%;transform:scaleX(0.819);">Successful transfers</div>
<div class="b" style="left:189.2px;top:222.8px;width:300.6px;height:74.4px;background:#4a2caf;border-radius:4px;"></div>
<div class="ov" style="left:204.4px;top:231.8px;font:22px/28px 'Liberation Sans',sans-serif;">public_html</div>
<div class="ov fab" style="right:410.3px;top:231.8px;direction:rtl;transform:scaleX(0.808);">فایل ها را در فلدر</div>
<div class="ov fab" style="right:410.3px;top:258.3px;direction:rtl;transform:scaleX(0.917);">آپلود کنید.</div>
</body></html>
